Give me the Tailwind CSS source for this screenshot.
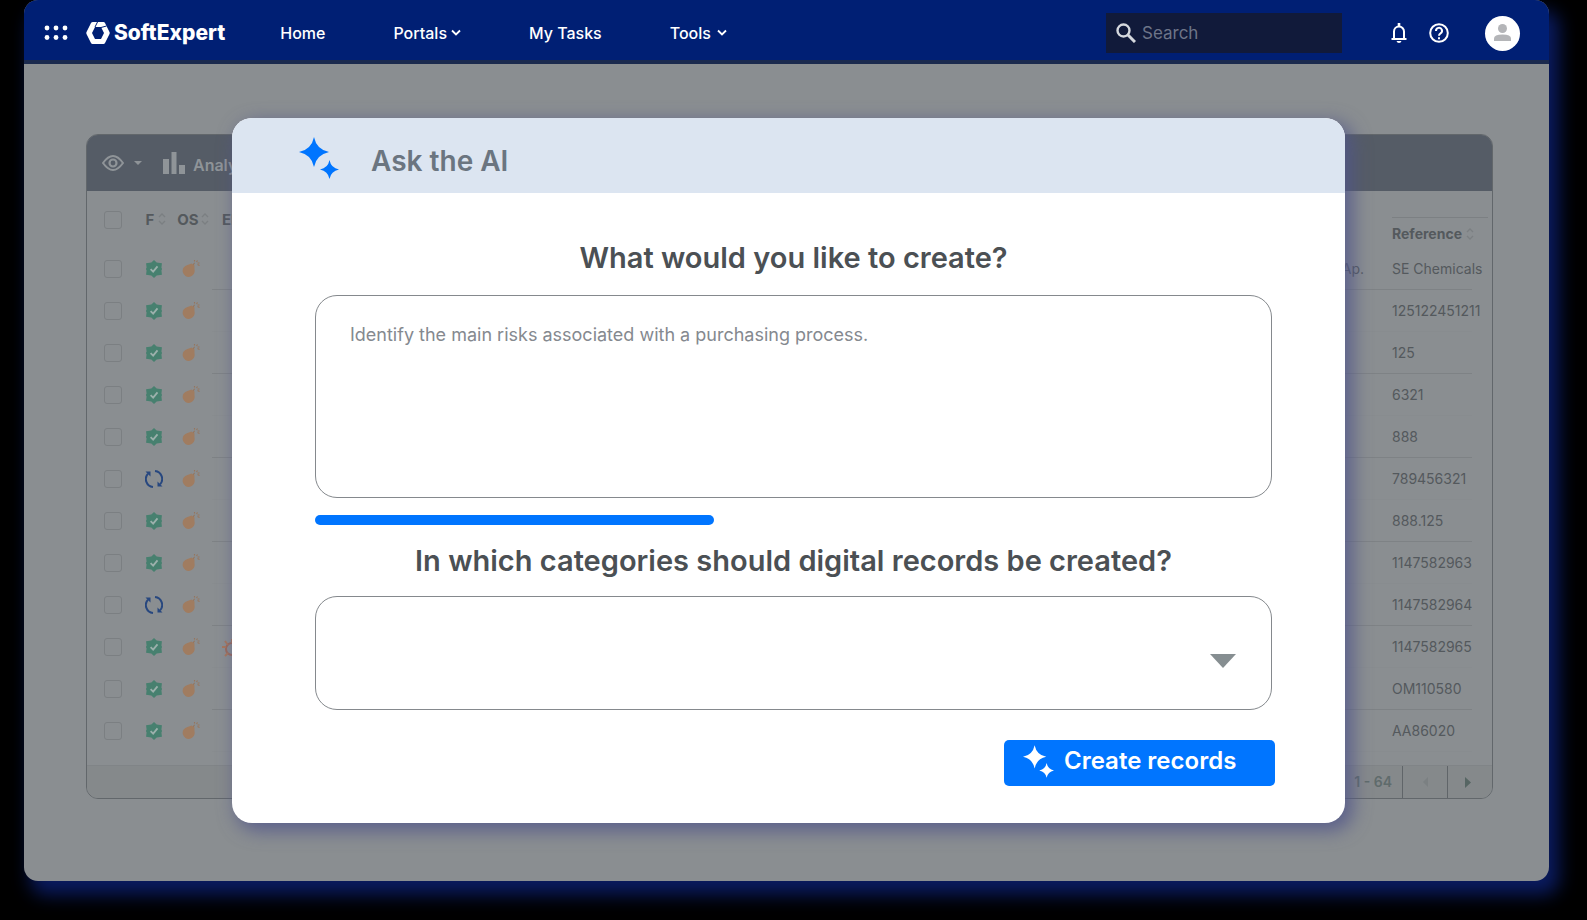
<!DOCTYPE html>
<html lang="en">
<head>
<meta charset="utf-8">
<title>SoftExpert</title>
<script src="https://cdn.jsdelivr.net/npm/@tailwindcss/browser@4"></script>
</head>
<body class="min-h-screen bg-black pl-6 pr-[38px] pb-10 font-['Inter',sans-serif] text-[#4b5054]">

<svg class="hidden" aria-hidden="true">
  <symbol id="sparkles" viewBox="0 0 40 42">
    <path d="M15 0 Q17.500 12.500 30 15 Q17.500 17.500 15 30 Q12.500 17.500 0 15 Q12.500 12.500 15 0Z"/>
    <path d="M30.500 23 Q32 31 40 32.500 Q32 34 30.500 42 Q29 34 21 32.500 Q29 31 30.500 23Z"/>
  </symbol>
  <symbol id="chevron" viewBox="0 0 10 8">
    <path d="M1 1.500 5 5.500 9 1.500" fill="none" stroke="currentColor" stroke-width="1.800"/>
  </symbol>
  <symbol id="sort" viewBox="0 0 8 12">
    <path d="M1 4 4 1 7 4M1 8 4 11 7 8" fill="none" stroke="currentColor" stroke-width="1.300"/>
  </symbol>
  <symbol id="approved" viewBox="0 0 16 17">
    <path d="M8 0 10.500 2.300 15.500 3 15 7 15.600 8.500 15 10 15.500 14 10.500 14.700 8 17 5.500 14.700 .500 14 1 10 .400 8.500 1 7 .500 3 5.500 2.300Z" fill="#47806f"/>
    <path d="M4.800 8.700 7.200 11 11.300 6" fill="none" stroke="#9cb0ac" stroke-width="1.700"/>
  </symbol>
  <symbol id="cycle" viewBox="0 0 18 18">
    <path d="M8 17A8 8 0 0 1 3 3.600M10 1A8 8 0 0 1 15 14.400" fill="none" stroke="#27477f" stroke-width="2"/>
    <path d="M0.500 1.500H5.500V6.500ZM17.500 16.500H12.500V11.500Z" fill="#27477f"/>
  </symbol>
  <symbol id="bomb" viewBox="0 0 18 18">
    <path d="M5.500 5 9.500 3.500 12.500 5.500 12.500 9.500A6 6 0 1 1 5.500 5Z" fill="#a07c60"/>
    <path d="M11.500 5 Q11.500 3 13 3M12.500 0V1.500M15.500 .500 14.500 2M15.500 4.500 17.500 5.500M15.500 3H17.500" fill="none" stroke="#97755c" stroke-width="1.100"/>
  </symbol>
  <symbol id="virus" viewBox="0 0 20 20">
    <circle cx="10" cy="12" r="6" fill="none" stroke="#9c6a5b" stroke-width="2"/>
    <path d="M0 10H4M3 4 6 8M10 2V6M3 19 6 16" stroke="#a8765b" stroke-width="2"/>
  </symbol>
</svg>

<div class="relative rounded-[14px] bg-[#8a8e91] shadow-[8px_12px_18px_2px_#0a1b60]">

  <header class="flex h-16 items-center rounded-t-[14px] border-b-4 border-[#1b2a4e] bg-[#001f74] pl-5 pr-[29px] pt-1.5 text-white">
    <button class="w-6" aria-label="Applications">
      <svg width="24" height="16" viewBox="0 0 24 16" fill="#fff"><circle cx="3" cy="3" r="2.400"/><circle cx="12" cy="3" r="2.400"/><circle cx="21" cy="3" r="2.400"/><circle cx="3" cy="12.500" r="2.400"/><circle cx="12" cy="12.500" r="2.400"/><circle cx="21" cy="12.500" r="2.400"/></svg>
    </button>
    <a href="#" class="ml-[18px] flex items-center gap-1 text-[21px] leading-6 font-extrabold">
      <svg width="24" height="22" viewBox="0 0 24 22">
        <path fill="#fff" fill-rule="evenodd" d="M7 0H17.500Q18.500 0 19 1L23.500 10Q24 11 23.500 12L19 21Q18.500 22 17.500 22H6.500Q5.500 22 5 21L.500 12Q0 11 .500 10L5 1Q5.500 0 7 0ZM9 5 6 11 9 17H15L18 11 15 5Z"/>
        <path stroke="#001f74" stroke-width="1" d="M11.500 0 9 5M15 5.500 20.500 4"/>
      </svg>
      SoftExpert
    </a>
    <nav class="ml-[55px] flex items-center gap-[68px] text-base font-medium">
      <a href="#">Home</a>
      <button class="flex items-center gap-1">Portals <svg class="h-2 w-[10px]"><use href="#chevron"/></svg></button>
      <a href="#">My Tasks</a>
      <button class="flex items-center gap-1.5">Tools <svg class="h-2 w-[10px]"><use href="#chevron"/></svg></button>
    </nav>
    <label class="ml-auto flex h-10 w-[236px] items-center gap-1.5 bg-[#111a3a] pl-[10px]">
      <svg width="20" height="20" viewBox="0 0 20 20" fill="none" stroke="#d5d8de"><circle cx="7.500" cy="7.500" r="6" stroke-width="2.400"/><path d="M12 12 19 19" stroke-width="3"/></svg>
      <input type="search" placeholder="Search" aria-label="Search" class="w-0 flex-1 pt-0.5 text-[17px] placeholder:text-[#6d7488] outline-none">
    </label>
    <button class="ml-[49px]" aria-label="Notifications">
      <svg width="16" height="20" viewBox="0 0 16 20"><path d="M3 15.500V8.500A5 5 0 0 1 13 8.500V15.500M.500 16H15.500" fill="none" stroke="#fff" stroke-width="2"/><path d="M6.700 0H9.300V4H6.700ZM5.500 18H10.500Q10 20 8 20T5.500 18Z" fill="#fff"/></svg>
    </button>
    <button class="ml-[22px]" aria-label="Help">
      <svg width="20" height="20" viewBox="0 0 20 20" fill="none" stroke="#fff" stroke-width="2"><circle cx="10" cy="10" r="8.800"/><path d="M7 8A3 3 0 1 1 11.500 10.400Q10 11.300 10 12.800"/><path d="M10 14.200V16.200"/></svg>
    </button>
    <button class="ml-9 rounded-full bg-white" aria-label="Account">
      <svg width="35" height="35" viewBox="0 0 35 35" fill="#b4b5b8"><circle cx="17.500" cy="12.500" r="4.500"/><path d="M9 25V22.500Q9 18.500 17.500 18.500T26 22.500V25Z"/></svg>
    </button>
  </header>

  <main class="pt-[70px] pr-14 pb-[82px] pl-[62px]">
    <div class="overflow-hidden rounded-xl border border-[#62676b]">
      <div class="flex h-14 items-center bg-[#555c66] pl-[15px] text-base font-semibold text-[#8f9498]">
        <button class="flex items-center gap-[10px]" aria-label="View">
          <svg width="22" height="16" viewBox="0 0 22 16" fill="none" stroke="#8f9498"><path d="M1 8Q11-6 21 8 11 22 1 8Z" stroke-width="2"/><circle cx="11" cy="8" r="3.500" stroke-width="2.200"/></svg>
          <svg width="8" height="4" viewBox="0 0 8 4" fill="#8f9498"><path d="M0 0H8L4 4Z"/></svg>
        </button>
        <button class="ml-[21px] flex items-center gap-2">
          <svg width="22" height="22" viewBox="0 0 22 22" fill="#8f9498"><path d="M0 7H6V22H0ZM8.500 0H13.500V22H8.500ZM16 13H22V22H16Z"/></svg>
          <span class="pt-1">Analysis</span>
        </button>
      </div>

      <table class="w-full table-fixed text-sm text-[#54595d]">
        <colgroup><col class="w-[51px]"><col class="w-8"><col class="w-[42px]"><col><col class="w-[100px]"></colgroup>
        <thead>
          <tr class="h-[57px] whitespace-nowrap">
            <th><input type="checkbox" aria-label="Select all" class="block mx-auto size-[18px] appearance-none rounded-[3px] border border-[#7b7f82]"></th>
            <th><span class="flex items-center justify-center gap-1 pl-1 text-[15px]">F <svg class="h-3 w-2 shrink-0 text-[#7b7f82]"><use href="#sort"/></svg></span></th>
            <th><span class="flex items-center justify-center gap-0.5 pl-1 text-[15px]">OS <svg class="h-3 w-2 shrink-0 text-[#7b7f82]"><use href="#sort"/></svg></span></th>
            <th class="pl-[10px] text-left text-[15px]">EP</th>
            <th class="pr-1 align-bottom"><span class="flex items-center gap-1 border-t border-[#7c8083] pt-1.5 pb-1">Reference <svg class="h-3 w-2 text-[#7b7f82]"><use href="#sort"/></svg></span></th>
          </tr>
        </thead>
        <tbody id="rows"></tbody>
      </table>

      <div class="mt-[13px] flex h-[33px] items-stretch justify-end border-t border-[#808487] bg-[#85898b] text-sm font-semibold text-[#5f6b6b]">
        <span class="flex items-center pr-[10px]">1 - 64</span>
        <button class="flex w-[45px] items-center justify-center border-l border-[#606569]" aria-label="Previous page"><svg width="5" height="10" viewBox="0 0 5 10" fill="#7b8082"><path d="M5 0V10L0 5Z"/></svg></button>
        <button class="flex w-[45px] items-center justify-center border-l border-[#606569] pr-1" aria-label="Next page"><svg width="6" height="11" viewBox="0 0 6 11" fill="#566563"><path d="M0 0V11L6 5.500Z"/></svg></button>
      </div>
    </div>
  </main>

  <section role="dialog" aria-labelledby="dialog-title" class="absolute top-[118px] right-51 left-52 overflow-hidden rounded-[20px] bg-white shadow-[6px_6px_18px_2px_#50558acc]">
    <div class="flex h-[75px] items-center gap-8 bg-[#dce5f1] pl-[67px] pt-1">
      <svg class="h-[42px] w-10 fill-[#0075ff]"><use href="#sparkles"/></svg>
      <h1 id="dialog-title" class="pt-1.5 text-[28px] leading-9 font-semibold text-[#6b7580]">Ask the AI</h1>
    </div>
    <form class="flex flex-col pt-[47px] pr-[73px] pb-[37px] pl-[83px]">
      <label for="prompt" class="text-center text-[29px] leading-9 font-semibold">What would you like to create?</label>
      <textarea id="prompt" class="mt-[19px] h-[203px] resize-none rounded-[22px] border border-[#85898d] px-[34px] py-[27px] text-lg leading-6 outline-none placeholder:text-[#85898f]" placeholder="Identify the main risks associated with a purchasing process."></textarea>
      <div role="progressbar" aria-label="Progress" aria-valuenow="42" class="mt-[17px] h-[10px]">
        <div class="h-full rounded-[5px] bg-[#0075ff]" style="width:41.7%"></div>
      </div>
      <label for="categories" class="mt-[18px] text-center text-[29px] leading-9 font-semibold">In which categories should digital records be created?</label>
      <div class="relative mt-[17px]">
        <select id="categories" class="block h-[114px] w-full appearance-none rounded-[22px] border border-[#85898d] px-[34px] text-lg"><option></option></select>
        <svg class="pointer-events-none absolute top-[58px] right-9" width="26" height="14" viewBox="0 0 26 14" fill="#868e91"><path d="M0 0H26L13 14Z"/></svg>
      </div>
      <button type="button" class="mt-[30px] -mr-[3px] flex h-[46px] w-[271px] items-center gap-2.5 self-end rounded-[5px] bg-[#0075ff] pb-1 pl-[19px] text-2xl font-semibold text-white">
        <svg class="h-[33px] w-[31px] fill-white"><use href="#sparkles"/></svg>
        Create records
      </button>
    </form>
  </section>
</div>

<script>
const refs = ['SE Chemicals','125122451211','125','6321','888','789456321','888.125','1147582963','1147582964','1147582965','OM110580','AA86020'];
document.getElementById('rows').innerHTML = refs.map((ref, i) => {
  const line = i % 2 ? 'border-[#888c8f]' : 'border-[#7e8285]';
  return `
  <tr class="h-[42px]">
    <td><input type="checkbox" aria-label="Select ${ref}" class="block mx-auto size-[18px] appearance-none rounded-[3px] border border-[#7b7f82]"></td>
    <td><svg class="mx-auto size-[18px]"><use href="#${i === 5 || i === 8 ? 'cycle' : 'approved'}"/></svg></td>
    <td><svg class="mx-auto size-[18px]"><use href="#bomb"/></svg></td>
    <td><div class="flex h-[42px] items-center border-b ${line} pr-7 pl-[10px]">${i === 0 ? '<span class="ml-auto">Ap.</span>' : i === 9 ? '<svg class="size-5"><use href="#virus"/></svg>' : ''}</div></td>
    <td class="pr-5 whitespace-nowrap"><div class="flex h-[42px] items-center border-b ${line}">${ref}</div></td>
  </tr>`;
}).join('');
</script>
</body>
</html>
